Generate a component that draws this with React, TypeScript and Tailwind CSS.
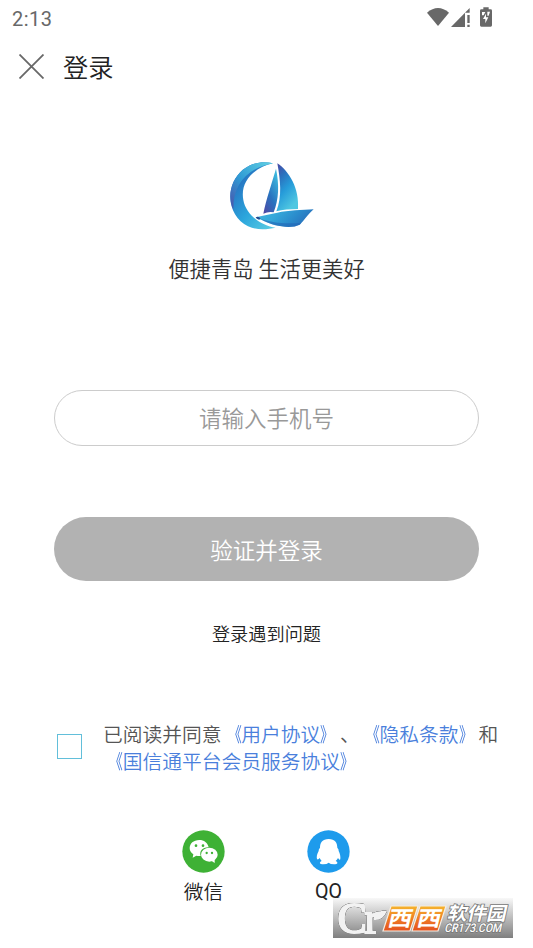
import React, { useState } from 'react';

const StatusIcons: React.FC = () => (
  <svg className="w-[120px] h-9" viewBox="0 0 360 108" fill="#686868">
    <path d="M42 38 Q75 10 108 38 L75 78 Z" />
    <path d="M170 24 V38 H156 V81 H114 Z" />
    <path d="M163 45 h7 v24 h-7z M163 74 h7 v7 h-7z" />
    <path d="M211 22 h16 v6 h6 q4 0 4 4 v44 q0 4 -4 4 h-28 q-4 0 -4 -4 v-44 q0 -4 4 -4 h6z" />
    <path d="M207 36 h10 l-5 10 h-5z M223 35 h8 l-4 12 h-4z M219 41 V52 H226 L217 70 V57 H210 Z" fill="#fff" />
  </svg>
);

const Logo: React.FC = () => (
  <svg className="w-[105px] h-[90px]" viewBox="0 0 315 270">
    <defs>
      <linearGradient id="ring" x1="0" y1="0" x2="0.8" y2="1">
        <stop offset="0" stopColor="#2b6fb9" />
        <stop offset="0.3" stopColor="#2779c4" />
        <stop offset="0.65" stopColor="#2ba5dc" />
        <stop offset="1" stopColor="#54c8e2" />
      </linearGradient>
      <linearGradient id="ringEdge" x1="0" y1="1" x2="1" y2="0">
        <stop offset="0" stopColor="#4b4fa8" />
        <stop offset="0.45" stopColor="#2f9bd5" />
        <stop offset="1" stopColor="#62d2e3" />
      </linearGradient>
      <linearGradient id="sail" x1="0" y1="0" x2="0.5" y2="1">
        <stop offset="0" stopColor="#4d46a4" />
        <stop offset="0.3" stopColor="#2b70bd" />
        <stop offset="0.6" stopColor="#269bd9" />
        <stop offset="1" stopColor="#4fc7e1" />
      </linearGradient>
      <linearGradient id="jib" x1="0" y1="1" x2="0.6" y2="0">
        <stop offset="0" stopColor="#5145a3" />
        <stop offset="0.5" stopColor="#2873bf" />
        <stop offset="1" stopColor="#3bb5dc" />
      </linearGradient>
      <linearGradient id="hull" x1="0" y1="0" x2="1" y2="0.3">
        <stop offset="0" stopColor="#43b6dc" />
        <stop offset="0.4" stopColor="#35a8da" />
        <stop offset="0.75" stopColor="#2a8acb" />
        <stop offset="1" stopColor="#2a73bd" />
      </linearGradient>
    </defs>
    <path d="M159 40 C112 28 62 49 40 97 C17 151 39 206 84 229 C112 242 144 238 167 233 C124 227 78 195 70 150 C60 97 98 54 159 40Z" fill="url(#ring)" />
    <path d="M159 40 C112 28 62 49 40 97 C27 126 29 155 40 179 C39 104 80 54 159 40Z" fill="url(#ringEdge)" />
    <path d="M168 56 C156 98 139 146 130 191 Q145 184 161 187 C177 148 178 104 168 56Z" fill="url(#jib)" />
    <path d="M172 40 C207 63 239 116 234 177 Q197 177 169 184 C187 140 181 91 172 40Z" fill="url(#sail)" />
    <path d="M107 202 Q142 194 172 188 C205 181 246 180 281 178 C263 193 253 212 239 224 Q218 234 185 229 C157 225 136 216 121 208 Q113 211 107 202Z" fill="url(#hull)" />
    <path d="M121 206 C150 216 195 224 244 218 L239 224 Q218 234 185 229 C157 225 136 216 121 206Z" fill="#2365b5" fillOpacity="0.6" />
    <path d="M107 202 Q116 196 122 207 Q112 211 107 202Z" fill="#264b91" />
  </svg>
);

const WechatIcon: React.FC = () => (
  <svg className="w-[43px] h-[43px]" viewBox="0 0 129 129">
    <circle cx="64.5" cy="64.5" r="63.5" fill="#3eb135" />
    <path d="M52 30 C34 30 23 41 23 54 C23 62 27 68 34 73 L32 83 L43 77 Q50 79 56 78 C51 63 63 51 80 52 C77 38 66 30 52 30Z" fill="#fff" />
    <ellipse cx="82" cy="74" rx="25" ry="21" fill="#fff" />
    <path d="M88 92 L98 99 L98 86Z" fill="#fff" />
    <g fill="#3eb135">
      <circle cx="42" cy="47" r="4" />
      <circle cx="63" cy="47" r="4" />
      <circle cx="74" cy="69" r="3.5" />
      <circle cx="90" cy="69" r="3.5" />
    </g>
  </svg>
);

const QQIcon: React.FC = () => (
  <svg className="w-[43px] h-[43px]" viewBox="0 0 129 129">
    <circle cx="64.5" cy="64.5" r="63.5" fill="#1e9bec" />
    <path d="M65 27 C46 27 39 39 39 53 Q34 58 35 63 C30 71 28 82 30 87 Q33 91 38 84 Q40 89 44 93 C35 98 38 103 49 103 Q60 103 65 98 Q70 103 81 103 C92 103 95 98 86 93 Q91 89 93 84 C97 90 99 91 100 87 C101 80 99 71 95 63 Q96 58 91 53 C91 39 84 27 65 27Z" fill="#fff" />
  </svg>
);

const Watermark: React.FC = () => (
  <svg className="absolute left-[333px] top-[898px] w-[180px] h-10 overflow-visible" viewBox="0 0 180 40">
    <defs>
      <linearGradient id="strip" x1="0" y1="0" x2="0" y2="1">
        <stop offset="0" stopColor="#f8f8f8" />
        <stop offset="0.5" stopColor="#bcbcbc" />
        <stop offset="1" stopColor="#7f7f7f" />
      </linearGradient>
      <linearGradient id="tile" x1="0" y1="0" x2="0" y2="1">
        <stop offset="0" stopColor="#f5b52d" />
        <stop offset="0.5" stopColor="#ef7d24" />
        <stop offset="1" stopColor="#e4511e" />
      </linearGradient>
    </defs>
    <rect width="180" height="40" fill="url(#strip)" />
    <g className="[filter:drop-shadow(0_0_0.6px_#444)_drop-shadow(0_0_0.6px_#555)]" fill="#f2f2f2">
      <text x="4.5 31.5" y="34.5" fontFamily="'Liberation Serif', serif" fontSize="44" stroke="#f2f2f2" strokeWidth="2.2">Cr</text>
      <path d="M41 19 Q46 11 54 13 Q50 23 41 22Z" />
    </g>
    <path d="M58 8 H85 L77 33 H50Z M87 8 H113 L105 33 H79Z" fill="url(#tile)" stroke="#f5eee4" strokeWidth="1.2" />
    <g fontFamily="'Noto Sans CJK SC', sans-serif" fontWeight="700" fill="#fff">
      <text transform="matrix(1.15 0 -0.23 1 54.5 0)" x="5" y="28" fontSize="21">西</text>
      <text transform="matrix(1.15 0 -0.23 1 83.5 0)" x="5" y="28" fontSize="21">西</text>
      <g transform="skewX(-13)" stroke="#777" strokeWidth="1.6" paintOrder="stroke">
        <text x="119" y="22.5" fontSize="18.5" textLength="59" lengthAdjust="spacingAndGlyphs">软件园</text>
        <text x="119" y="34" fontSize="12" fontFamily="Roboto, sans-serif" fontWeight="500" textLength="57" lengthAdjust="spacingAndGlyphs">CR173.COM</text>
      </g>
    </g>
  </svg>
);

// Title marks are narrowed towards the name they enclose
const Agreement: React.FC<{ name: string }> = ({ name }) => (
  <a className="text-[#4a7fdc]">
    <span className="inline-block origin-right scale-x-[0.7] font-normal">《</span>
    {name}
    <span className="inline-block origin-left scale-x-[0.7] font-normal">》</span>
  </a>
);

const App: React.FC = () => {
  const [phone, setPhone] = useState('');
  const [agreed, setAgreed] = useState(false);

  return (
    <div className="relative w-[533px] h-[948px] overflow-hidden bg-white font-[350] text-[#222] font-['Noto_Sans_CJK_SC',sans-serif]">
      <div className="flex justify-between h-9">
        <span className="pl-3 pt-[7px] font-[Roboto,sans-serif] font-normal text-[20px] leading-6 tracking-[0.5px] text-[#686868]">2:13</span>
        <StatusIcons />
      </div>

      <header className="flex items-center h-[61px] pl-[19px] gap-[19px]">
        <svg className="w-[25px] h-[25px]" viewBox="0 0 25 25" stroke="#686868" strokeWidth="1.8">
          <path d="M0.5 0.5 L24.5 24.5 M24.5 0.5 L0.5 24.5" />
        </svg>
        <h1 className="-mt-px text-[25.3px] leading-9 font-[350]">登录</h1>
      </header>

      <div className="flex flex-col items-center pt-[53px]">
        <div className="pl-[11px]">
          <Logo />
        </div>
        <p className="mt-[13px] text-[21.3px] leading-[30px] text-[#333]">便捷青岛 生活更美好</p>
      </div>

      <main className="mt-[107px] px-[54px] flex flex-col items-center">
        <input
          value={phone}
          onChange={(e) => setPhone(e.target.value)}
          placeholder="请输入手机号"
          className="w-[425px] h-14 pb-0.5 rounded-full border border-[#ccc] text-center text-[22.5px] placeholder:text-[#999] outline-none"
        />
        <button className="mt-[71.4px] w-[425px] h-16 rounded-full bg-[#b2b2b2] text-[22.5px] text-white">验证并登录</button>
        <a className="mt-[37.6px] text-[18.2px] leading-7">登录遇到问题</a>
      </main>

      <div className="flex items-center mt-[73px] pl-[57px] gap-[21px]">
        <button
          onClick={() => setAgreed(!agreed)}
          className={`w-[25px] h-[25px] border border-[#62bfda] ${agreed ? 'bg-[#62bfda]' : 'bg-white'}`}
        />
        <p className="text-[19.75px] leading-[27px] text-[#555] whitespace-nowrap [text-spacing-trim:space-all]">
          已阅读并同意<Agreement name="用户协议" />、<Agreement name="隐私条款" />和
          <br />
          <Agreement name="国信通平台会员服务协议" />
        </p>
      </div>

      <div className="flex mt-[56px] pl-[182px] gap-[82px]">
        <div className="flex flex-col items-center w-[43px]">
          <WechatIcon />
          <span className="mt-1 text-[19.7px] leading-7">微信</span>
        </div>
        <div className="flex flex-col items-center w-[43px]">
          <QQIcon />
          <span className="mt-[5px] font-[Roboto,sans-serif] font-normal text-[19.7px] leading-7">QQ</span>
        </div>
      </div>

      <Watermark />
    </div>
  );
};

export default App;
